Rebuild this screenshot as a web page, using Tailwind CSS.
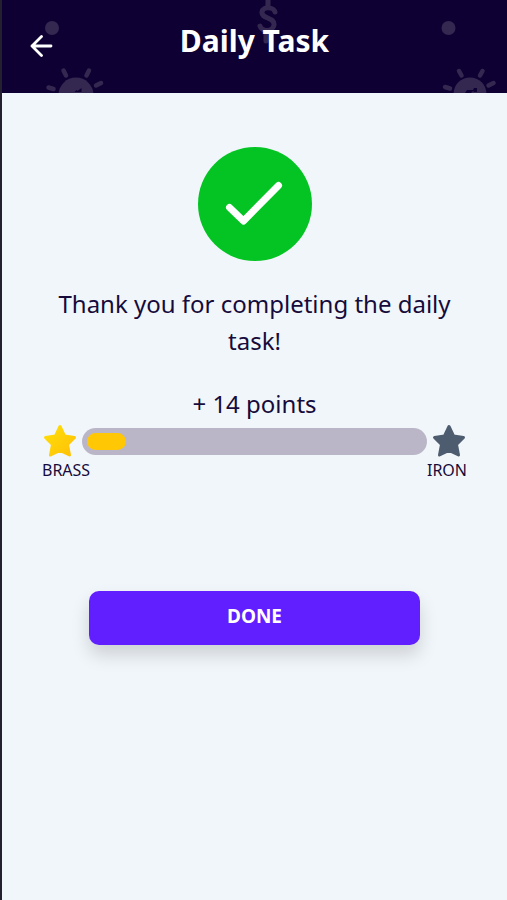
<!DOCTYPE html>
<html lang="en">
<head>
<meta charset="utf-8">
<meta name="viewport" content="width=device-width, initial-scale=1">
<title>Daily Task</title>
<script src="https://cdn.jsdelivr.net/npm/@tailwindcss/browser@4"></script>
</head>
<body class="min-h-screen border-l-2 border-[#25202f] bg-[#f1f6fa] font-['Noto_Sans',sans-serif] text-[#160b3b]">
  <header class="relative flex h-[93px] items-start overflow-hidden bg-[#0e0033] px-6">
    <!-- Faint header pattern -->
    <svg class="absolute top-0 left-0 h-[93px] w-[120px]" viewBox="0 0 120 93" aria-hidden="true">
      <g fill="#342851" stroke="#342851" stroke-linecap="round">
        <circle cx="50" cy="28" r="7" stroke="none"/>
        <circle cx="74" cy="95" r="17.5" stroke="none"/>
        <path d="M61.500 70.500l2.500 5M87 70.500l-2.500 5M46.500 87.500l5 1.500M99 83l-5 2.500" stroke-width="4.500"/>
        <path d="M72.500 92l2-2 1 1 4-3v4z" fill="#0e0033" stroke="none"/>
      </g>
    </svg>
    <svg class="absolute top-0 left-1/2 h-[46px] w-6" viewBox="0 0 24 46" aria-hidden="true">
      <path d="M13 0v6M20 12C19 7 8 6 7 12C6 19 20 17 19 25C18 32 7 32 5 26M11 31v10" fill="none" stroke="#342851" stroke-width="5" stroke-linecap="round"/>
    </svg>
    <svg class="absolute top-0 right-0 h-[93px] w-[87px]" viewBox="0 0 87 93" aria-hidden="true">
      <g fill="#342851" stroke="#342851" stroke-linecap="round">
        <circle cx="28.500" cy="28" r="7" stroke="none"/>
        <circle cx="50" cy="94" r="16.500" stroke="none"/>
        <path d="M39 71l2.500 4.500M62.500 71l-2.500 4.500M25 87l5 1.500M73.500 83l-5 2.500" stroke-width="4.500"/>
        <path d="M45 93l2-3 6 0 1-2 3 0v4h-3l-1-1-2 2z" fill="#0e0033" stroke="none"/>
      </g>
    </svg>
    <div class="relative grid w-full grid-cols-[32px_1fr_32px] items-start pt-[21px]">
      <button type="button" aria-label="Back" class="mt-2 flex h-8 w-8 cursor-pointer items-center justify-center">
        <svg class="h-6 w-6" viewBox="0 0 24 24" fill="none" stroke="#fff" stroke-width="2.800" stroke-linecap="round" stroke-linejoin="round" aria-hidden="true"><path d="M21 13H2M11.500 3.500L2 13l9.500 9.500"/></svg>
      </button>
      <h1 class="text-center text-[30px] leading-[40px] font-bold text-white">Daily Task</h1>
    </div>
  </header>

  <main class="flex flex-col px-10 pt-[54px] text-center">
    <svg class="h-[114px] w-[114px] self-center" viewBox="0 0 114 114" role="img" aria-label="Completed">
      <circle cx="57" cy="57" r="57" fill="#04c423"/>
      <path d="M31.500 60.500L45.500 74L80.500 38.500" fill="none" stroke="#fff" stroke-width="7" stroke-linecap="round" stroke-linejoin="round"/>
    </svg>
    <p class="mt-6 text-2xl leading-[37px]">Thank you for completing the daily task!</p>
    <p class="mt-[26px] text-2xl leading-[37px]">+ 14 points</p>

    <div class="mt-px flex items-center gap-1">
      <svg class="h-9 w-9 shrink-0" viewBox="0 0 36 36" aria-hidden="true">
        <defs><linearGradient id="brass" x1="0" y1="0" x2="1" y2="1"><stop offset="0" stop-color="#ffdf08"/><stop offset="1" stop-color="#ffc008"/></linearGradient></defs>
        <path d="M18 3.500L22.500 13L32.500 14.500L25.500 21.500L27.500 32L18 27.500L8.500 32L10.500 21.500L3.500 14.500L13.500 13Z" fill="url(#brass)" stroke="url(#brass)" stroke-width="3" stroke-linejoin="round"/>
      </svg>
      <div class="h-[27px] flex-1 rounded-full bg-[#bbb6c7] p-[5px]" role="progressbar" aria-label="Progress from brass to iron" aria-valuemin="0" aria-valuemax="100" aria-valuenow="12">
        <div class="h-full rounded-full bg-[#ffc704]" style="width:11.6%"></div>
      </div>
      <svg class="h-9 w-9 shrink-0" viewBox="0 0 36 36" aria-hidden="true">
        <path d="M18 3.500L22.500 13L32.500 14.500L25.500 21.500L27.500 32L18 27.500L8.500 32L10.500 21.500L3.500 14.500L13.500 13Z" fill="#4e5c70" stroke="#4e5c70" stroke-width="3" stroke-linejoin="round"/>
      </svg>
    </div>
    <div class="flex justify-between text-base leading-[22px]">
      <span>BRASS</span>
      <span>IRON</span>
    </div>

    <button type="button" class="mx-[47px] mt-[110px] h-[54px] cursor-pointer rounded-[10px] bg-[#611fff] pb-1 text-[19px] font-bold text-white shadow-[0_10px_18px_rgba(0,0,0,0.15)]">DONE</button>
  </main>
</body>
</html>
